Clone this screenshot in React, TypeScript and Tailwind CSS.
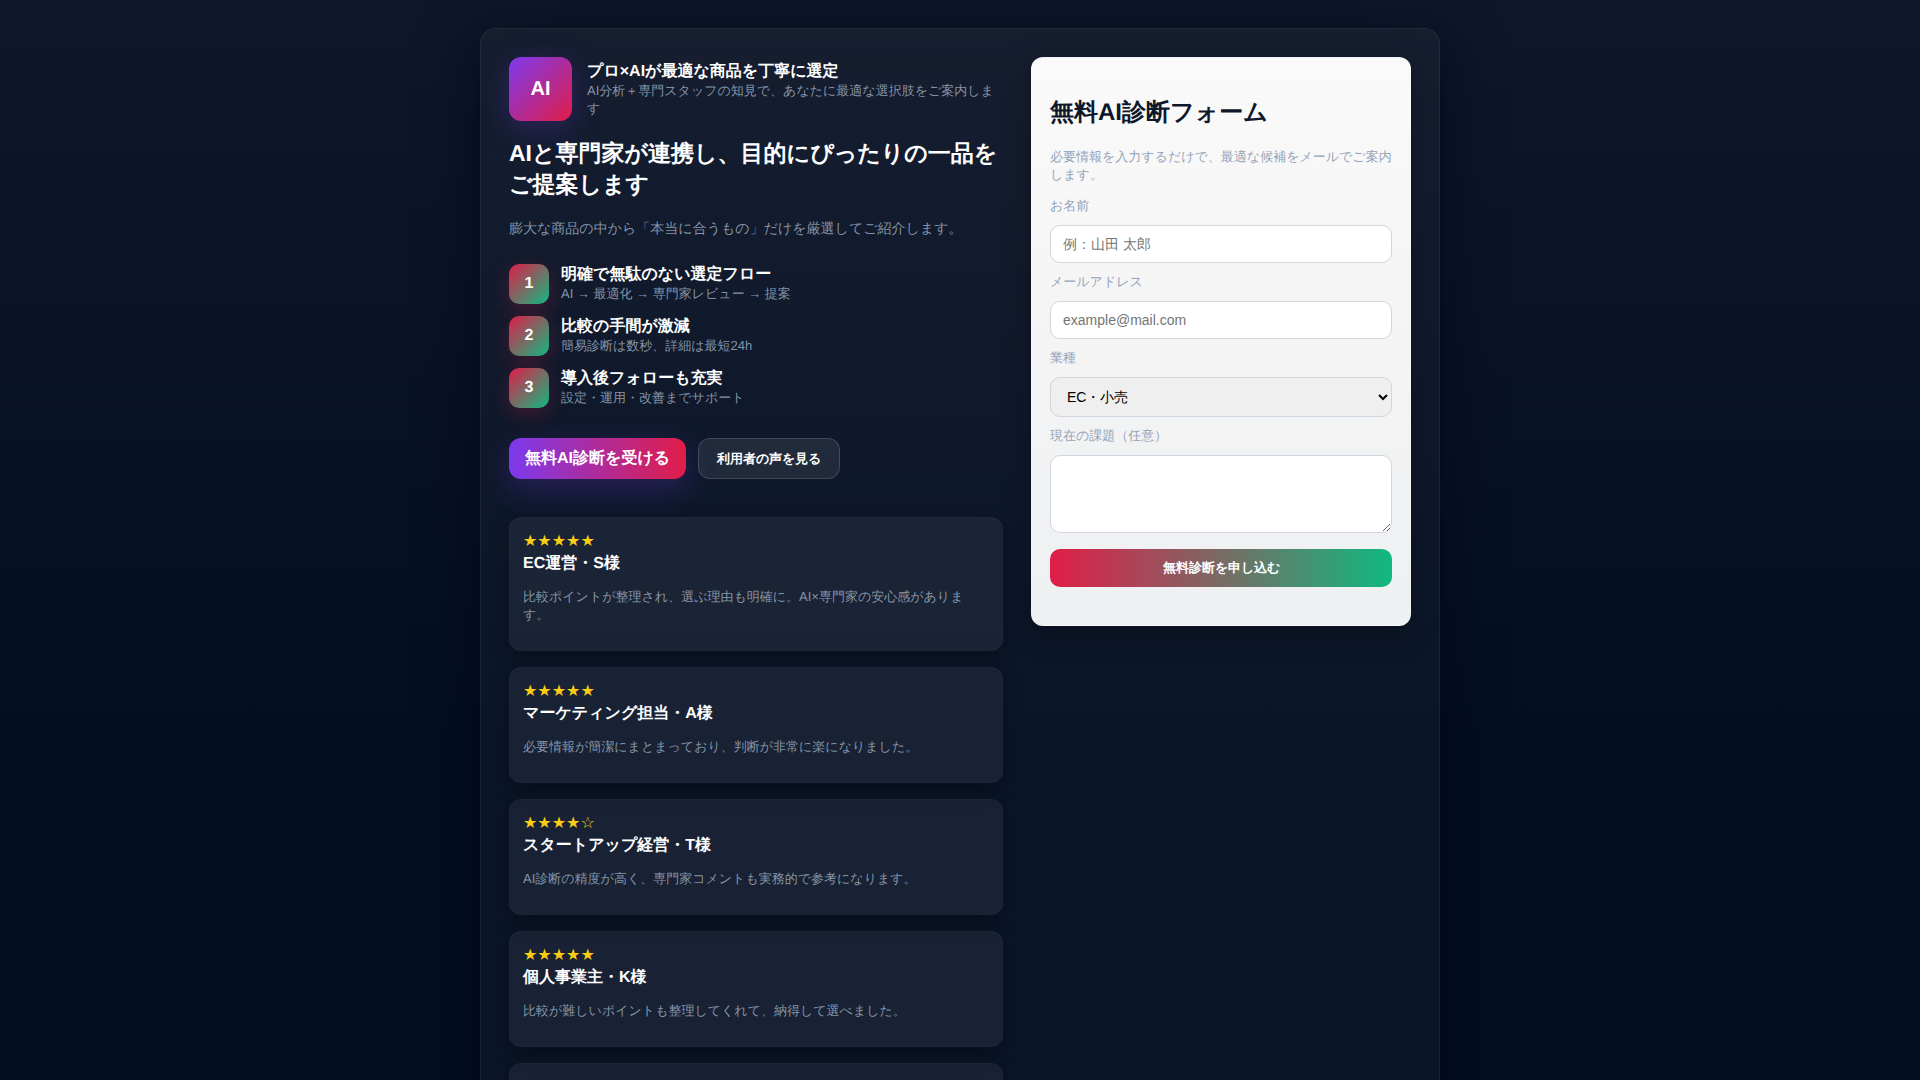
const steps = [
  { title: '明確で無駄のない選定フロー', text: 'AI → 最適化 → 専門家レビュー → 提案' },
  { title: '比較の手間が激減', text: '簡易診断は数秒、詳細は最短24h' },
  { title: '導入後フォローも充実', text: '設定・運用・改善までサポート' },
];

const reviews = [
  { stars: '★★★★★', name: 'EC運営・S様', text: '比較ポイントが整理され、選ぶ理由も明確に。AI×専門家の安心感があります。' },
  { stars: '★★★★★', name: 'マーケティング担当・A様', text: '必要情報が簡潔にまとまっており、判断が非常に楽になりました。' },
  { stars: '★★★★☆', name: 'スタートアップ経営・T様', text: 'AI診断の精度が高く、専門家コメントも実務的で参考になります。' },
  { stars: '★★★★★', name: '個人事業主・K様', text: '比較が難しいポイントも整理してくれて、納得して選べました。' },
  { stars: '★★★★★', name: '店舗運営・M様', text: '相談から提案までが早く、安心してお任せできました。' },
];

const field =
  'my-2.5 block w-full rounded-[10px] border border-[#d1d5e0] px-3 text-sm leading-4 placeholder:text-[#757575]';
const label = 'block text-[13px] leading-[18px] text-[#94a3b8]';

function Hero() {
  return (
    <>
      <header className="flex items-center gap-[15px]">
        <div className="flex h-16 w-[63px] shrink-0 items-center justify-center rounded-xl bg-linear-135/srgb from-[#7c3aed] to-[#e11d48] text-xl font-bold shadow-[0_8px_30px_rgba(124,58,237,0.25)]">
          AI
        </div>
        <div>
          <div className="text-base leading-[21px] font-bold">プロ×AIが最適な商品を丁寧に選定</div>
          <div className="text-[13px] leading-[18px] text-[#94a3b8]/90">
            AI分析＋専門スタッフの知見で、あなたに最適な選択肢をご案内します
          </div>
        </div>
      </header>
      <h1 className="mt-[17px] text-[23px] leading-[31px] font-bold">
        AIと専門家が連携し、目的にぴったりの一品をご提案します
      </h1>
      <p className="mt-[18px] text-sm leading-5 text-[#94a3b8]/90">
        膨大な商品の中から「本当に合うもの」だけを厳選してご紹介します。
      </p>
      <ol className="mt-[26px] flex flex-col gap-3">
        {steps.map((s, i) => (
          <li key={s.title} className="flex gap-3">
            <div className="flex size-10 items-center justify-center rounded-[10px] bg-linear-135/srgb from-[#e11d48] to-[#10b981] font-bold shadow-[0_6px_20px_rgba(225,29,72,0.25)]">
              {i + 1}
            </div>
            <div>
              <div className="text-base leading-[21px] font-bold">{s.title}</div>
              <div className="text-[13px] leading-[18px] text-[#94a3b8]/90">{s.text}</div>
            </div>
          </li>
        ))}
      </ol>
      <div className="mt-[30px] flex gap-3">
        <a
          href="#form"
          className="rounded-xl bg-linear-to-r/srgb from-[#7c3aed] to-[#e11d48] px-4 py-2.5 text-base leading-[21px] font-bold shadow-[0_10px_30px_rgba(124,58,237,0.25)]"
        >
          無料AI診断を受ける
        </a>
        <button
          type="button"
          className="rounded-xl border border-white/15 bg-white/8 px-[18px] text-[13px] leading-5 font-bold"
        >
          利用者の声を見る
        </button>
      </div>
    </>
  );
}

function Reviews() {
  return (
    <section className="mt-[38px] flex flex-col gap-4">
      {reviews.map((r) => (
        <article
          key={r.name}
          className="rounded-xl border border-white/2 bg-white/6 px-[13px] pt-3 pb-[26px] shadow-[0_6px_20px_rgba(0,0,0,0.3)]"
        >
          <div className="font-['DejaVu_Sans',sans-serif] text-base leading-[22px] text-[#facc15]">{r.stars}</div>
          <h3 className="text-base leading-6 font-bold">{r.name}</h3>
          <p className="mt-3 text-[13px] leading-[18px] text-[#94a3b8]/90">{r.text}</p>
        </article>
      ))}
    </section>
  );
}

function DiagnosisForm() {
  return (
    <form
      id="form"
      className="rounded-xl border border-white/5 bg-linear-to-b/srgb from-[#fafafa] via-[#f4f4f4] to-[#eef0f2] px-[18px] pt-[37px] pb-[38px] shadow-[0_8px_30px_rgba(0,0,0,0.3)]"
      onSubmit={(e) => e.preventDefault()}
    >
      <h2 className="text-2xl leading-9 font-bold text-[#0f172a]">無料AI診断フォーム</h2>
      <p className="mt-[17px] mb-[13px] text-[13px] leading-[18px] text-[#94a3b8]">
        必要情報を入力するだけで、最適な候補をメールでご案内します。
      </p>
      <label htmlFor="name" className={label}>お名前</label>
      <input id="name" type="text" placeholder="例：山田 太郎" className={`${field} h-[38px] bg-white`} />
      <label htmlFor="email" className={label}>メールアドレス</label>
      <input id="email" type="email" placeholder="example@mail.com" className={`${field} h-[38px] bg-white`} />
      <label htmlFor="industry" className={label}>業種</label>
      <select id="industry" className={`${field} h-10 bg-[#efefef] text-black`}>
        <option>EC・小売</option>
        <option>サービス業</option>
        <option>その他</option>
      </select>
      <label htmlFor="issue" className={label}>現在の課題（任意）</label>
      <textarea id="issue" className={`${field} h-[78px] resize bg-white py-2.5 text-black`} />
      <button
        type="submit"
        className="mt-4 block h-[38px] w-full rounded-[10px] bg-linear-to-r/srgb from-[#e11d48] to-[#10b981] text-[13px] font-bold"
      >
        無料診断を申し込む
      </button>
    </form>
  );
}

export default function App() {
  return (
    <div
      lang="ja"
      className="h-screen overflow-hidden bg-linear-to-b/srgb from-[#0f172a] to-[#030e22] to-70% px-5 pt-7 font-['Liberation_Sans',sans-serif] text-white [text-rendering:geometricPrecision]"
    >
      <main className="mx-auto grid max-w-[960px] grid-cols-[1fr_380px] items-start gap-7 rounded-2xl border border-white/6 bg-white/3 p-7 shadow-[0_10px_60px_rgba(2,6,23,0.7)]">
        <div>
          <Hero />
          <Reviews />
        </div>
        <DiagnosisForm />
      </main>
    </div>
  );
}
